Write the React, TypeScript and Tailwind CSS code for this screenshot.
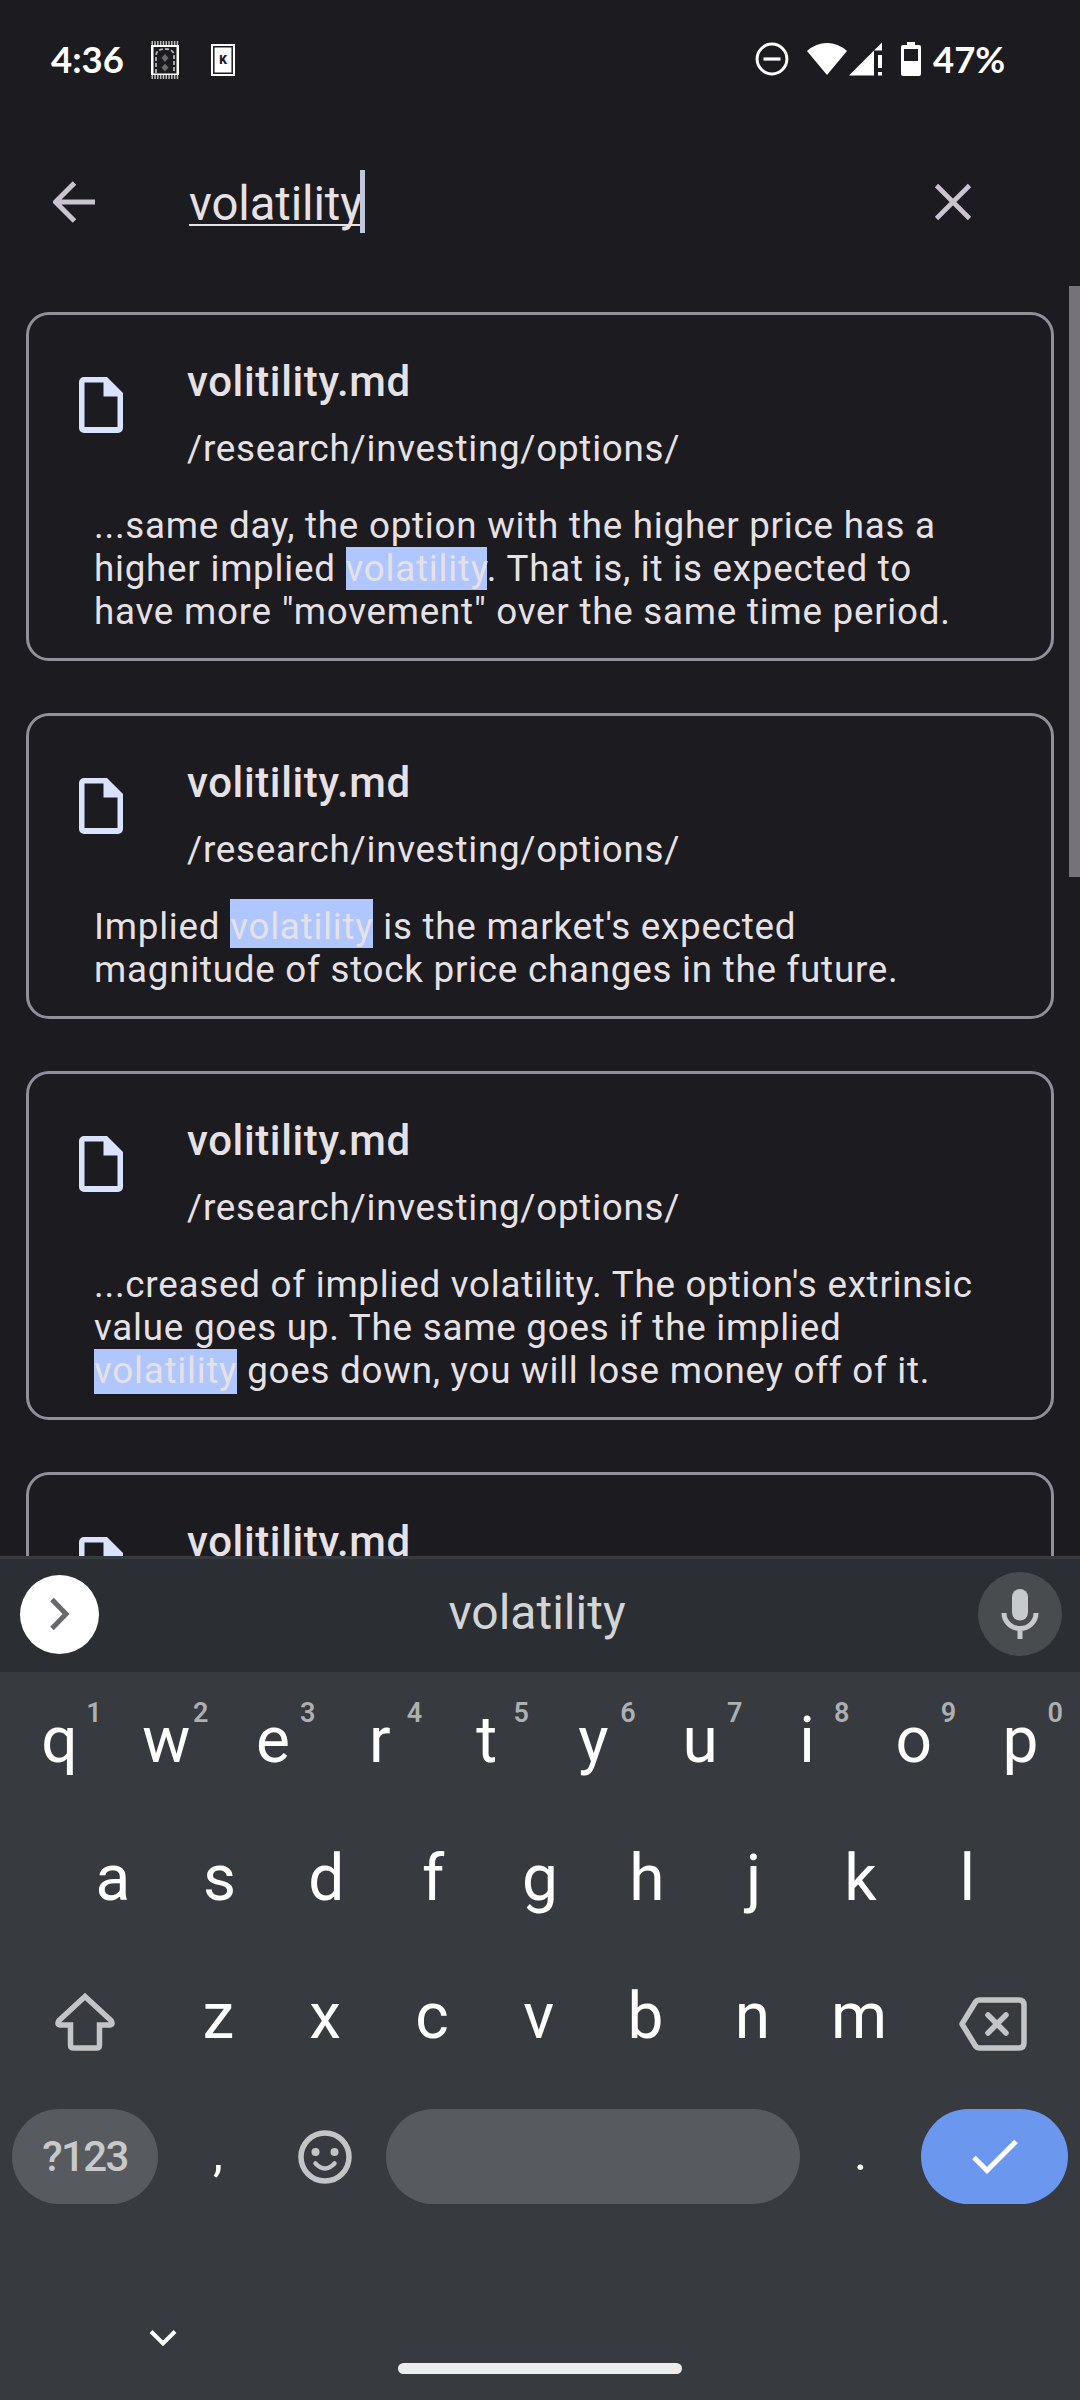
import React from "react";

const PATH = "/research/investing/options/";

function Mark({ children, edge }: { children: React.ReactNode; edge?: "first" | "last" }) {
  const pad = edge === "first" ? "pt-[6px]" : edge === "last" ? "pb-[2px]" : "";
  return <span className={`bg-[#b0c6ff] ${pad}`}>{children}</span>;
}

function StatusBar() {
  return (
    <header className="flex h-[118px] shrink-0 items-center pl-[51px] pr-[74px] font-['Lato'] text-[36.5px] font-bold leading-none text-white">
      <span className="w-[100px]">4:36</span>
      <svg className="mt-[2px] h-[38px] w-[28px]" viewBox="0 0 28 38">
        <path d="M.5 2h27M.5 36h27" stroke="#bdbdbd" strokeWidth="4" strokeDasharray="1.500 1.300" />
        <path d="M0 4h28v30H0z" fill="#fff" />
        <path d="M2.500 6h23v26.500h-23z" fill="#1c1b1f" />
        <path d="M5 32V15q0-7 9-7t9 7v17" fill="none" stroke="#b5b5b5" strokeWidth="1.800" strokeDasharray="4 2" />
        <path d="M14 13l3.500 4-3.500 4-3.500-4zM14 22.500l3.500 4-3.500 4-3.500-4z" fill="#6b6a6e" />
      </svg>
      <svg className="ml-[32px] mt-[2px] h-[32px] w-[24px]" viewBox="0 0 24 32">
        <path d="M0 0h24v32H0z" fill="#fff" />
        <path d="M2.800 2.800h18.400v26.400H2.800z" fill="none" stroke="#1c1b1f" strokeWidth="1.500" />
        <text x="12" y="20" textAnchor="middle" fontFamily="Roboto" fontSize="12" fontWeight="900" fill="#1c1b1f">K</text>
      </svg>
      <span className="flex-1" />
      <svg className="h-[34px] w-[34px]" viewBox="0 0 34 34">
        <circle cx="17" cy="17" r="14.900" fill="none" stroke="#fff" strokeWidth="3" />
        <path d="M8.500 17h17" stroke="#fff" strokeWidth="3.200" />
      </svg>
      <svg className="ml-[18px] h-[34px] w-[40px]" viewBox="0 0 40 34">
        <path d="M0 9Q9 1 20 1t20 8L20 33z" fill="#fff" />
      </svg>
      <svg className="ml-[2px] h-[34px] w-[33px]" viewBox="0 0 33 34">
        <path d="M0 33.500L25 8.500v25zM25 8.500l8-8v8z" fill="#fff" />
        <path d="M29 13h4v13h-4zM29 30h4v3.500h-4z" fill="#fff" />
      </svg>
      <svg className="ml-[19px] h-[34px] w-[20px]" viewBox="0 0 20 34">
        <path fillRule="evenodd" d="M6 0h8v3h4a2 2 0 0 1 2 2v27a2 2 0 0 1-2 2H2a2 2 0 0 1-2-2V5a2 2 0 0 1 2-2h4zM3 7v12h14V7z" fill="#fff" />
      </svg>
      <span className="ml-[12px] w-[73px] whitespace-nowrap">47%</span>
    </header>
  );
}

function SearchBar() {
  return (
    <div className="flex h-[168px] shrink-0 items-start pl-[53px] pt-[52px]">
      <svg className="mt-[11px] h-[42px] w-[42px]" viewBox="0 0 42 42">
        <path d="M42 21H4M21.500 2L2.500 21l19 19" fill="none" stroke="#cac4d0" strokeWidth="5" />
      </svg>
      <div className="ml-[94px] flex h-[63px] items-start">
        <span className="mt-[3px] w-[171px] whitespace-nowrap text-[47.25px] leading-[63px] tracking-[-0.1px] underline decoration-2 underline-offset-[4px] [text-decoration-skip-ink:none]">
          volatility
        </span>
        <span className="h-[63px] w-[5px] bg-[#bfc6dc]" />
      </div>
      <svg className="ml-[569px] mt-[13px] h-[38px] w-[38px]" viewBox="0 0 38 38">
        <path d="M2.500 2.500l33 33M35.500 2.500l-33 33" fill="none" stroke="#cac4d0" strokeWidth="4.600" />
      </svg>
    </div>
  );
}

function ResultCard({ path, lines = [] }: { path?: string; lines?: React.ReactNode[] }) {
  return (
    <article className="rounded-[23px] border-[3px] border-[#918f9a] pb-[25px] pl-[50px] pt-[35px]">
      <div className="flex">
        <svg className="mt-[27px] h-[56px] w-[44px]" viewBox="0 0 44 56">
          <path fillRule="evenodd" d="M5 0h23l16 16v35a5 5 0 0 1-5 5H5a5 5 0 0 1-5-5V5a5 5 0 0 1 5-5zM5.500 5.500v44.500h33V19.500H24.500V5.500z" fill="#d9e2ff" />
        </svg>
        <div className="ml-[64px]">
          <h2 className="text-[42px] font-medium leading-[63px] tracking-[0.62px]">volitility.md</h2>
          {path && <p className="mt-[8px] text-[36.75px] leading-[55px] tracking-[0.75px]">{path}</p>}
        </div>
      </div>
      <div className="ml-[15px] mt-[28px] whitespace-nowrap text-[36.75px] leading-[43px] tracking-[0.76px]">
        {lines.map((line, i) => (
          <p key={i}>{line}</p>
        ))}
      </div>
    </article>
  );
}

function Key({ label, hint }: { label: string; hint?: string }) {
  return (
    <div className="relative flex w-[106.8px] justify-center text-[64px] leading-[138px] text-white">
      {label}
      {hint && (
        <span className="absolute left-[68px] top-[25px] w-[40px] text-center text-[27px] font-semibold leading-[32px] text-[#adafb1]">
          {hint}
        </span>
      )}
    </div>
  );
}

function Keyboard() {
  return (
    <section className="flex h-[844px] shrink-0 flex-col bg-[#373a3f]">
      <div className="flex h-[116px] items-center justify-between border-t-[3px] border-[#373a3f] bg-[#2b2e32] pb-[3px] pl-[20px] pr-[18px]">
        <div className="flex h-[79px] w-[79px] items-center justify-center rounded-full bg-white">
          <svg className="h-[34px] w-[20px]" viewBox="0 0 20 34">
            <path d="M2 2.500L16 17 2 31.500" fill="none" stroke="#68696b" strokeWidth="5" />
          </svg>
        </div>
        <span className="mb-[3px] mr-[3px] text-[48px] leading-none text-[#d3d4d6]">volatility</span>
        <div className="flex h-[84px] w-[84px] items-center justify-center rounded-full bg-[#484c4e]">
          <svg className="h-[50px] w-[38px]" viewBox="0 0 38 50">
            <rect x="11" y="0" width="16" height="31.500" rx="8" fill="#c8c9cb" />
            <path d="M3 24a16 15.500 0 0 0 32 0M19 39v11" fill="none" stroke="#c8c9cb" strokeWidth="5" />
          </svg>
        </div>
      </div>
      <div className="flex h-[138px] justify-center">
        {"qwertyuiop".split("").map((k, i) => (
          <Key key={k} label={k} hint={String((i + 1) % 10)} />
        ))}
      </div>
      <div className="flex h-[138px] justify-center">
        {"asdfghjkl".split("").map((k) => (
          <Key key={k} label={k} />
        ))}
      </div>
      <div className="flex h-[138px] items-center">
        <div className="flex w-[165px] justify-center">
          <svg className="ml-[4px] mt-[10px] h-[58px] w-[60px]" viewBox="0 0 60 58">
            <path d="M30 3.500L4 27.500q-2.500 4 1 4.500h10.500v20q0 3 3 3h23q3 0 3-3V32H55q3.500-.5 1-4.500z" fill="none" stroke="#c3c4c6" strokeWidth="5.500" />
          </svg>
        </div>
        {"zxcvbnm".split("").map((k) => (
          <Key key={k} label={k} />
        ))}
        <svg className="ml-[46px] mt-[14px] h-[54px] w-[68px]" viewBox="0 0 68 54">
          <path d="M20 3h40q5 0 5 5v38q0 5-5 5H20q-2 0-3.500-2L3 27 16.500 5Q18 3 20 3z" fill="none" stroke="#c3c4c6" strokeWidth="5.500" strokeLinejoin="round" />
          <path d="M29 18l18 18M47 18L29 36" fill="none" stroke="#c3c4c6" strokeWidth="5.500" strokeLinecap="round" />
        </svg>
      </div>
      <div className="mt-[23px] flex h-[95px] items-center pl-[12px]">
        <div className="flex h-[95px] w-[146px] items-center justify-center rounded-full bg-[#575a5e] text-[42px] font-medium tracking-[-1.6px] text-[#c8c9cb]">
          ?123
        </div>
        <span className="w-[120px] pb-[6px] text-center text-[50px] text-white">,</span>
        <svg className="ml-[20px] h-[54px] w-[54px]" viewBox="0 0 54 54">
          <circle cx="27" cy="27" r="24" fill="none" stroke="#c3c4c6" strokeWidth="5.500" />
          <circle cx="17.500" cy="22" r="4" fill="#c3c4c6" />
          <circle cx="36.500" cy="22" r="4" fill="#c3c4c6" />
          <path d="M17.500 33.500q9.500 10 19 0" fill="none" stroke="#c3c4c6" strokeWidth="4.500" strokeLinecap="round" />
        </svg>
        <div className="ml-[34px] h-[95px] w-[414px] rounded-full bg-[#575a5e]" />
        <span className="w-[121px] pb-[6px] text-center text-[50px] text-white">.</span>
        <div className="flex h-[95px] w-[147px] items-center justify-center rounded-full bg-[#6b97ef]">
          <svg className="h-[35px] w-[46px]" viewBox="0 0 46 35">
            <path d="M2 18.500L15 31.500 44 2.500" fill="none" stroke="#fff" strokeWidth="5" />
          </svg>
        </div>
      </div>
      <div className="flex flex-1 items-start pl-[149px] pt-[125px]">
        <svg className="h-[18px] w-[28px]" viewBox="0 0 28 18">
          <path d="M2 2.500l12 12 12-12" fill="none" stroke="#fff" strokeWidth="4" />
        </svg>
        <div className="ml-[221px] mt-[34px] h-[11px] w-[284px] rounded-full bg-[#ececec]" />
      </div>
    </section>
  );
}

export default function App() {
  return (
    <div className="flex h-[2400px] w-[1080px] flex-col overflow-hidden bg-[#1c1b1f] font-['Roboto',sans-serif] text-[#e6e1e5]">
      <StatusBar />
      <SearchBar />
      <main className="relative flex min-h-0 flex-1 flex-col gap-[52px] overflow-hidden px-[26px] pt-[26px] [&>article]:shrink-0">
        <ResultCard
          path={PATH}
          lines={[
            "...same day, the option with the higher price has a",
            <>higher implied <Mark>volatility</Mark>. That is, it is expected to</>,
            'have more "movement" over the same time period.',
          ]}
        />
        <ResultCard
          path={PATH}
          lines={[
            <>Implied <Mark edge="first">volatility</Mark> is the market's expected</>,
            "magnitude of stock price changes in the future.",
          ]}
        />
        <ResultCard
          path={PATH}
          lines={[
            "...creased of implied volatility. The option's extrinsic",
            "value goes up. The same goes if the implied",
            <><Mark edge="last">volatility</Mark> goes down, you will lose money off of it.</>,
          ]}
        />
        <ResultCard />
        <div className="absolute right-0 top-0 h-[591px] w-[11px] bg-[#757279]" />
      </main>
      <Keyboard />
    </div>
  );
}
